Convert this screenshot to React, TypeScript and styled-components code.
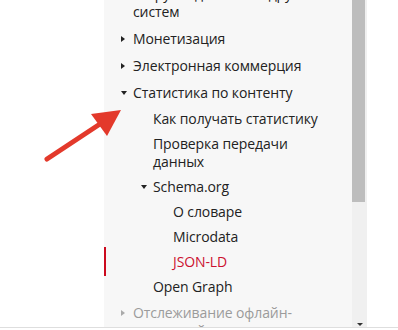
import styled, { createGlobalStyle } from "styled-components";

const Global = createGlobalStyle`
  html, body {
    margin: 0;
    padding: 0;
    background: #fff;
  }
  body {
    font-family: "Open Sans", "Liberation Sans", sans-serif;
    font-size: 14px;
  }
`;

const Page = styled.div`
  position: relative;
  width: 398px;
  height: 330px;
  overflow: hidden;
`;

const Frame = styled.div`
  display: flex;
  height: 327px;
  border-bottom: 1px solid #dedede;
`;

const Gutter = styled.div`
  width: 104px;
  flex: none;
`;

const Sidebar = styled.nav`
  width: 248px;
  flex: none;
  background: #f7f7f7;
  overflow: hidden;
  padding-right: 26px;
  box-sizing: border-box;
`;

const Tree = styled.ul`
  list-style: none;
  margin: -20px 0 0;
  padding: 0;
`;

const Row = styled.li<{ $level: number; $active?: boolean; $muted?: boolean }>`
  position: relative;
  display: grid;
  grid-template-columns: 13px 1fr;
  padding: ${(p) => (p.$level === 1 ? "4.5px" : "3.5px")} 0
    ${(p) => (p.$level === 1 ? "4.5px" : "3.5px")}
    ${(p) => 16 + (p.$level - 1) * 20}px;
  line-height: 18px;
  letter-spacing: -0.1px;
  color: ${(p) => (p.$active ? "#cc1130" : p.$muted ? "#9b9b9b" : "#222")};

  ${(p) =>
    p.$active &&
    `
    &::before {
      content: "";
      position: absolute;
      left: 0;
      top: -2px;
      bottom: -2px;
      width: 2px;
      background: #cc0a1e;
    }
  `}
`;

const CaretCell = styled.span`
  height: 18px;
  display: flex;
  align-items: center;
`;

const Caret = styled.span<{ $open?: boolean; $muted?: boolean }>`
  width: 0;
  height: 0;
  margin-left: 1px;
  ${(p) =>
    p.$open
      ? `
    border-left: 3px solid transparent;
    border-right: 3px solid transparent;
    border-top: 4px solid ${p.$muted ? "#aaa" : "#222"};
  `
      : `
    border-top: 3.5px solid transparent;
    border-bottom: 3.5px solid transparent;
    border-left: 4px solid ${p.$muted ? "#aaa" : "#222"};
  `}
`;

const Scrollbar = styled.div`
  width: 15px;
  flex: none;
  background: #f0f0f0;
  display: flex;
  flex-direction: column;
`;

const Thumb = styled.div`
  height: 202px;
  width: 13px;
  background: #bdbdbd;
`;

const Track = styled.div`
  flex: 1;
`;

const ScrollArrow = styled.div`
  align-self: center;
  margin-bottom: 1px;
  width: 0;
  height: 0;
  border-left: 3.5px solid transparent;
  border-right: 3.5px solid transparent;
  border-top: 3px solid #333;
`;

const Pointer = styled.svg`
  position: absolute;
  left: 0;
  top: 0;
  pointer-events: none;
`;

type Item = {
  title: string;
  level: number;
  caret?: "open" | "closed";
  active?: boolean;
  muted?: boolean;
};

const items: Item[] = [
  { title: "Загрузка данных из других систем", level: 1 },
  { title: "Монетизация", level: 1, caret: "closed" },
  { title: "Электронная коммерция", level: 1, caret: "closed" },
  { title: "Статистика по контенту", level: 1, caret: "open" },
  { title: "Как получать статистику", level: 2 },
  { title: "Проверка передачи данных", level: 2 },
  { title: "Schema.org", level: 2, caret: "open" },
  { title: "О словаре", level: 3 },
  { title: "Microdata", level: 3 },
  { title: "JSON-LD", level: 3, active: true },
  { title: "Open Graph", level: 2 },
  { title: "Отслеживание офлайн-конверсий", level: 1, caret: "closed", muted: true },
];

export default function App() {
  return (
    <Page>
      <Global />
      <Frame>
        <Gutter />
        <Sidebar>
          <Tree>
            {items.map((item) => (
              <Row
                key={item.title}
                $level={item.level}
                $active={item.active}
                $muted={item.muted}
              >
                <CaretCell>
                  {item.caret && (
                    <Caret $open={item.caret === "open"} $muted={item.muted} />
                  )}
                </CaretCell>
                <span>{item.title}</span>
              </Row>
            ))}
          </Tree>
        </Sidebar>
        <Scrollbar>
          <Thumb />
          <Track />
          <ScrollArrow />
        </Scrollbar>
      </Frame>
      <Pointer width="398" height="330" viewBox="0 0 398 330">
        <line
          x1="47"
          y1="159"
          x2="103"
          y2="122"
          stroke="#e3392b"
          strokeWidth="5"
          strokeLinecap="round"
        />
        <polygon points="121,110 91,114 107,136" fill="#e3392b" />
      </Pointer>
    </Page>
  );
}
